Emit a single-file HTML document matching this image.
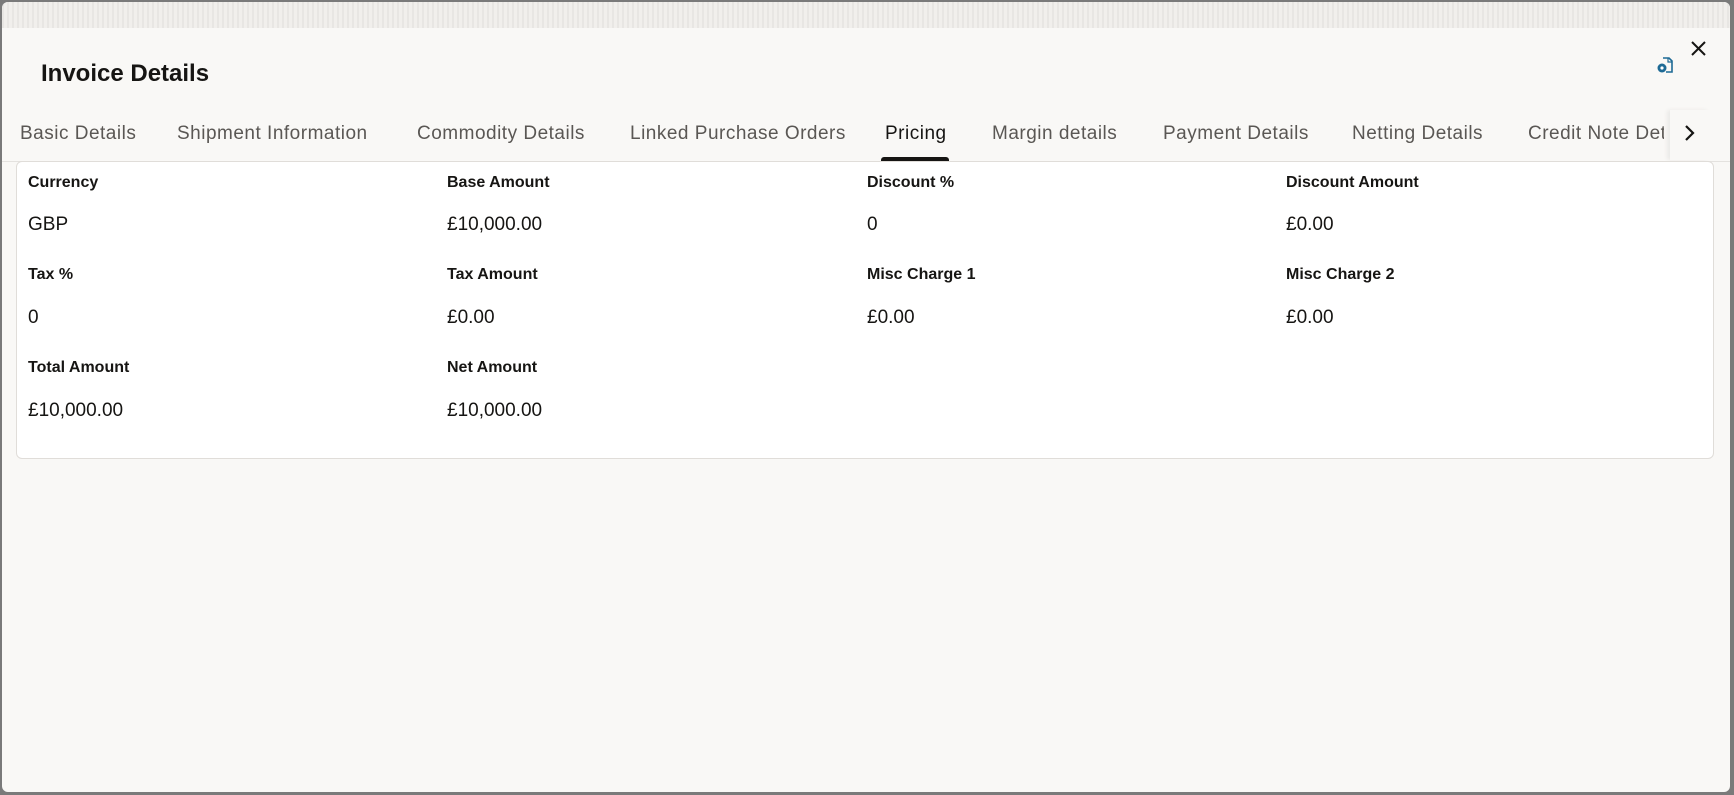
<!DOCTYPE html>
<html><head><style>
*{margin:0;padding:0;box-sizing:border-box}
body{width:1734px;height:795px;background:#7a7a7a;position:relative;overflow:hidden;font-family:"Liberation Sans",sans-serif}
.modal{position:absolute;left:2px;top:2px;width:1728px;height:790px;background:#f9f8f6;border-radius:6px;overflow:hidden}
.strip{position:absolute;left:0;top:0;right:0;height:26px;background:repeating-linear-gradient(90deg,#e8e6e3 0 2px,#f1efec 2px 5px)}
.title{position:absolute;left:39px;top:58px;font-size:24px;font-weight:bold;color:#161513}
.tab{position:absolute;top:121px;font-size:19px;color:#5a5754;white-space:nowrap;letter-spacing:0.5px}
.tab.act{color:#161513}
.ul{position:absolute;left:879px;top:155px;width:68px;height:4px;background:#161513;border-radius:3px 3px 0 0}
.line{position:absolute;left:0;right:0;top:159px;height:1px;background:#e4e2df}
.panel{position:absolute;left:14px;top:159px;width:1698px;height:298px;background:#fff;border:1px solid #e0ddd9;border-radius:6px}
.l{position:absolute;font-size:16px;font-weight:bold;color:#161513}
.v{position:absolute;font-size:19px;color:#161513}
.chev{position:absolute;left:1668px;top:108px;width:40px;height:50px;background:#f9f8f6;box-shadow:-3px 0 4px rgba(0,0,0,0.06)}
</style></head><body>
<div class="modal">
<div class="strip"></div>
<div class="title">Invoice Details</div>
<svg style="position:absolute;left:1654px;top:54px" width="18" height="18" viewBox="0 0 18 18"><path d="M7 2h6l3 3v11H10" fill="none" stroke="#1e6a95" stroke-width="1.6"/><path d="M12 2v4h4" fill="none" stroke="#1e6a95" stroke-width="1.2"/><circle cx="6" cy="12" r="4.5" fill="#1e6a95"/><circle cx="6" cy="12" r="1.6" fill="#fff"/></svg>
<svg style="position:absolute;left:1688px;top:38px" width="17" height="17" viewBox="0 0 17 17"><path d="M2 2L15 15M15 2L2 15" stroke="#161513" stroke-width="2"/></svg>
<div class="line"></div>
<div class="tab" style="left:18px">Basic Details</div>
<div class="tab" style="left:175px">Shipment Information</div>
<div class="tab" style="left:415px">Commodity Details</div>
<div class="tab" style="left:628px">Linked Purchase Orders</div>
<div class="tab act" style="left:883px">Pricing</div>
<div class="tab" style="left:990px">Margin details</div>
<div class="tab" style="left:1161px">Payment Details</div>
<div class="tab" style="left:1350px">Netting Details</div>
<div class="tab" style="left:1526px;width:136px;overflow:hidden">Credit Note Details</div>
<div class="ul"></div>
<div class="chev"><svg style="position:absolute;left:13px;top:14px" width="12" height="18" viewBox="0 0 12 18"><path d="M3 2l7 7-7 7" fill="none" stroke="#161513" stroke-width="2.2"/></svg></div>
<div class="panel">
<div class="l" style="left:11px;top:12px">Currency</div>
<div class="l" style="left:430px;top:12px">Base Amount</div>
<div class="l" style="left:850px;top:12px">Discount %</div>
<div class="l" style="left:1269px;top:12px">Discount Amount</div>
<div class="v" style="left:11px;top:52px">GBP</div>
<div class="v" style="left:430px;top:52px">£10,000.00</div>
<div class="v" style="left:850px;top:52px">0</div>
<div class="v" style="left:1269px;top:52px">£0.00</div>
<div class="l" style="left:11px;top:104px">Tax %</div>
<div class="l" style="left:430px;top:104px">Tax Amount</div>
<div class="l" style="left:850px;top:104px">Misc Charge 1</div>
<div class="l" style="left:1269px;top:104px">Misc Charge 2</div>
<div class="v" style="left:11px;top:145px">0</div>
<div class="v" style="left:430px;top:145px">£0.00</div>
<div class="v" style="left:850px;top:145px">£0.00</div>
<div class="v" style="left:1269px;top:145px">£0.00</div>
<div class="l" style="left:11px;top:197px">Total Amount</div>
<div class="l" style="left:430px;top:197px">Net Amount</div>
<div class="v" style="left:11px;top:238px">£10,000.00</div>
<div class="v" style="left:430px;top:238px">£10,000.00</div>
</div>
</div>
</body></html>
